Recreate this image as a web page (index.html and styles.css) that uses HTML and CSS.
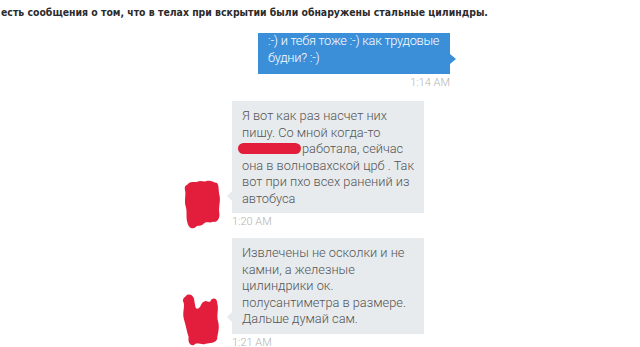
FILE: index.html
```html
<!DOCTYPE html>
<html lang="ru">
<head>
<meta charset="UTF-8" />
<meta name="viewport" content="width=device-width, initial-scale=1" />
<title>Переписка</title>
<link rel="stylesheet" href="styles.css">
</head>
<body>
<p class="lead">есть сообщения о том, что в телах при вскрытии были обнаружены стальные цилиндры.</p>

<div class="chat">
  <div class="msg out">
    <div class="bubble">:-) и тебя тоже :-) как трудовые будни? :-)</div>
    <div class="time">1:14 AM</div>
  </div>

  <div class="msg in">
    <svg class="avatar-mask" width="40" height="55" viewBox="0 0 44 56">
      <path d="M6 6 C9 2 14 4 17 3 C21 1 24 4 28 2 C32 1 35 4 38 4 C41 6 40 12 41 17 C43 24 40 30 41 37 C42 43 39 48 34 47 C30 49 27 46 24 49 C21 53 17 50 15 53 C11 56 7 53 6 48 C4 42 6 36 4 30 C2 23 5 17 3 11 C3 8 4 7 6 6 Z" fill="#e31e3c"/>
    </svg>
    <div class="bubble">Я вот как раз насчет них пишу. Со мной когда-то <span class="redact"></span>работала, сейчас она в волновахской црб . Так вот при пхо всех ранений из автобуса</div>
    <div class="time tight">1:20 AM</div>
  </div>

  <div class="msg in">
    <svg class="avatar-mask second" width="40" height="58" viewBox="0 0 42 56">
      <path d="M5 4 C9 0 14 4 14 9 C15 14 15 18 18 17 C21 16 21 11 24 10 C26 7 30 12 31 9 C33 5 38 6 38 11 C40 18 37 24 39 31 C41 38 38 45 38 49 C36 54 30 53 26 54 C22 56 17 52 14 55 C10 57 7 53 8 47 C6 41 5 34 3 28 C1 20 5 14 2 9 C2 7 3 5 5 4 Z" fill="#e31e3c"/>
    </svg>
    <div class="bubble">Извлечены не осколки и не камни, а железные цилиндрики ок. полусантиметра в размере. Дальше думай сам.</div>
    <div class="time">1:21 AM</div>
  </div>
</div>
</body>
</html>
```

FILE: styles.css
```css
body {
  margin: 0;
  background: #fff;
  font-family: "DejaVu Sans Condensed", "DejaVu Sans", sans-serif;
  overflow: hidden;
}
.lead {
  margin: 0;
  padding: 5px 0 0 1px;
  font-size: 10.4px;
  line-height: 14px;
  font-weight: bold;
  color: #2b2b2b;
}
.chat {
  width: 218px;
  margin: 14px 0 0 232px;
  display: flex;
  flex-direction: column;
  font-family: Roboto, "Liberation Sans", sans-serif;
  font-weight: 300;
}
.msg {
  position: relative;
  display: flex;
  flex-direction: column;
}
.bubble {
  position: relative;
  width: 192px;
  box-sizing: border-box;
  font-size: 12.8px;
  line-height: 16.5px;
}
.out .bubble {
  align-self: flex-end;
  width: 192px;
  padding: 0 2px 8px 10px;
  background: #3b8fd9;
  color: #fff;
  letter-spacing: -0.25px;
}
.out .bubble::after {
  content: "";
  position: absolute;
  right: -6px;
  top: 21px;
  border-left: 6px solid #3b8fd9;
  border-top: 5px solid transparent;
  border-bottom: 5px solid transparent;
}
.in .bubble {
  padding: 7px 4px 6px 10px;
  background: #e7ebee;
  color: #555;
}
.in .bubble::before {
  content: "";
  position: absolute;
  left: -5px;
  bottom: 12px;
  border-right: 5px solid #e7ebee;
  border-top: 5px solid transparent;
  border-bottom: 5px solid transparent;
}
.time {
  font-size: 11px;
  line-height: 18px;
  color: #b3b3b3;
  margin-bottom: 9px;
}
.time.tight {
  margin-bottom: 7px;
}
.out .time {
  align-self: flex-end;
}
.redact {
  display: inline-block;
  width: 63px;
  height: 11px;
  margin: 0 1px 0 -4px;
  border-radius: 6px;
  background: #e31e3c;
  vertical-align: -1px;
}
.avatar-mask {
  position: absolute;
  left: -50px;
  top: 76px;
  z-index: 1;
}
.avatar-mask.second {
  left: -51px;
  top: 52px;
}
```
